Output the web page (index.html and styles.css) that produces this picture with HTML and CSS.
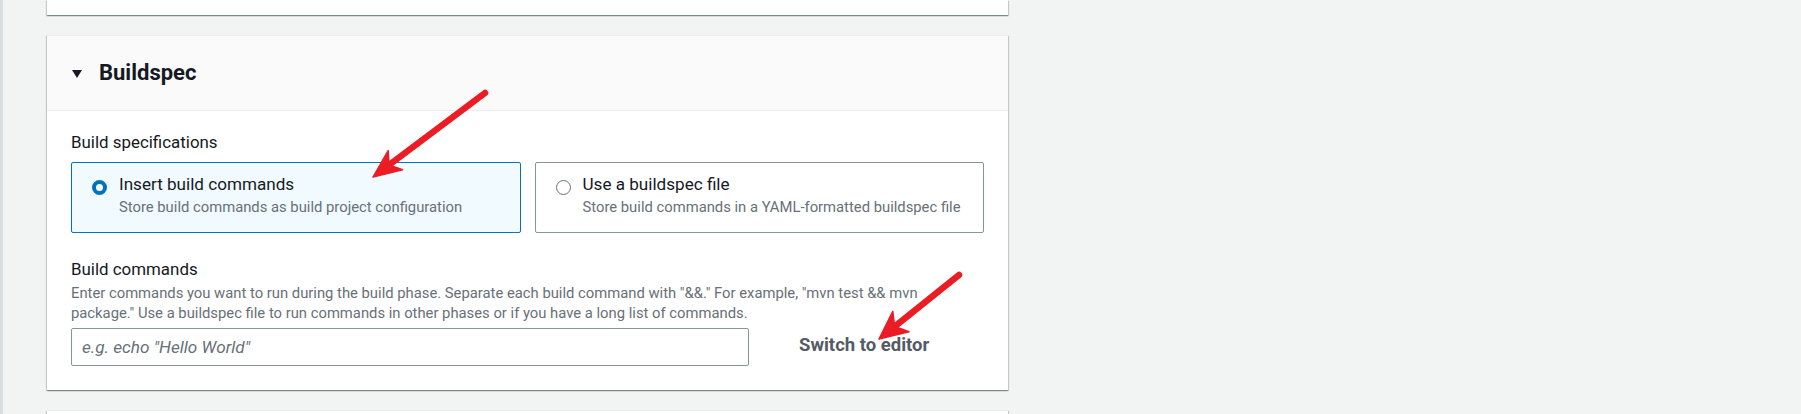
FILE: index.html
```html
<!DOCTYPE html>
<html lang="en">
<head>
<meta charset="utf-8">
<title>Buildspec</title>
<link rel="stylesheet" href="styles.css">
</head>
<body>
<div class="layout">
  <div class="edge"></div>
  <main class="main">
    <section class="card card-stub"></section>
    <section class="card">
      <header class="card-header">
        <span class="caret"></span>
        <h2 class="card-title">Buildspec</h2>
      </header>
      <div class="card-body">
        <div class="field">
          <div class="label">Build specifications</div>
          <div class="tiles">
            <label class="tile selected">
              <span class="radio on"></span>
              <span class="tile-text">
                <span class="tile-title">Insert build commands</span>
                <span class="tile-desc">Store build commands as build project configuration</span>
              </span>
            </label>
            <label class="tile">
              <span class="radio"></span>
              <span class="tile-text">
                <span class="tile-title">Use a buildspec file</span>
                <span class="tile-desc">Store build commands in a YAML-formatted buildspec file</span>
              </span>
            </label>
          </div>
        </div>
        <div class="field field-commands">
          <div class="label">Build commands</div>
          <div class="desc">Enter commands you want to run during the build phase. Separate each build command with "&amp;&amp;." For example, "mvn test &amp;&amp; mvn<br>package." Use a buildspec file to run commands in other phases or if you have a long list of commands.</div>
          <div class="control-row">
            <input class="input" type="text" placeholder='e.g. echo "Hello World"'>
            <button class="link-btn" type="button">Switch to editor</button>
          </div>
        </div>
      </div>
    </section>
    <section class="card card-next"></section>
  </main>
</div>
<svg class="annotations" width="1801" height="414" viewBox="0 0 1801 414" aria-hidden="true">
  <line x1="485" y1="93" x2="391" y2="163.5" class="shaft"/>
  <polygon points="373,177 388.2,150.6 389,165 402.6,169.8" class="head"/>
  <line x1="959" y1="275" x2="896" y2="325.5" class="shaft"/>
  <polygon points="879,339 892.8,311.3 894.6,326.5 909,331.7" class="head"/>
</svg>
</body>
</html>
```
FILE: styles.css
```css
html, body {
  margin: 0;
  padding: 0;
}
body {
  background: #f2f3f3;
  font-family: Roboto, "Liberation Sans", Arial, sans-serif;
  color: #16191f;
  width: 1801px;
  height: 414px;
  overflow: hidden;
  position: relative;
}
.layout {
  display: flex;
  height: 414px;
}
.edge {
  width: 3px;
  background: #d9dede;
  flex: none;
}
.main {
  padding-left: 44px;
  width: 961px;
  flex: none;
}
.card {
  background: #ffffff;
  box-shadow: 0 1px 1px 0 rgba(0, 28, 36, 0.3), 1px 1px 1px 0 rgba(0, 28, 36, 0.15), -1px 1px 1px 0 rgba(0, 28, 36, 0.15);
  border-top: 1px solid #eaeded;
  margin-bottom: 20px;
}
.card-stub {
  height: 15px;
  border-top: none;
}
.card-next {
  height: 20px;
}
.card-header {
  display: flex;
  align-items: center;
  height: 75px;
  box-sizing: border-box;
  padding-left: 25px;
  background: #fafafa;
  border-bottom: 1px solid #eaeded;
}
.caret {
  width: 0;
  height: 0;
  border-left: 5px solid transparent;
  border-right: 5px solid transparent;
  border-top: 8px solid #16191f;
  margin-right: 17px;
  margin-top: 1px;
}
.card-title {
  margin: 0;
  font-size: 22px;
  font-weight: 700;
  line-height: 28px;
  color: #16191f;
}
.card-body {
  padding: 20px 24px 24px 24px;
}
.label {
  font-size: 16.9px;
  line-height: 23px;
  color: #16191f;
}
.tiles {
  display: grid;
  grid-template-columns: 1fr 1fr;
  gap: 14px;
  margin-top: 8px;
}
.tile {
  display: flex;
  align-items: flex-start;
  border: 1px solid #879596;
  border-radius: 2px;
  padding: 10px 12px 15px 20px;
  background: #ffffff;
}
.tile.selected {
  background: #f1faff;
  border-color: #0073bb;
}
.radio {
  width: 15px;
  height: 15px;
  box-sizing: border-box;
  border-radius: 50%;
  border: 1px solid #687078;
  background: #ffffff;
  margin-top: 6.5px;
  margin-right: 12px;
  flex: none;
}
.radio.on {
  border: 4.5px solid #0073bb;
}
.tile-title {
  display: block;
  font-size: 17.1px;
  line-height: 23px;
  color: #16191f;
}
.tile-text {
  display: flex;
  flex-direction: column;
}
.tile-desc {
  font-size: 14.8px;
  line-height: 20px;
  margin-top: 1px;
  color: #687078;
}
.field-commands {
  margin-top: 25px;
}
.desc {
  font-size: 14.8px;
  line-height: 20px;
  margin-top: 2px;
  color: #687078;
}
.control-row {
  display: flex;
  align-items: center;
  margin-top: 5px;
}
.input {
  width: 678px;
  height: 38px;
  box-sizing: border-box;
  border: 1px solid #879596;
  border-radius: 2px;
  padding: 0 10px;
  font-family: Roboto, "Liberation Sans", Arial, sans-serif;
  font-size: 17.2px;
  color: #16191f;
  background: #ffffff;
}
.input::placeholder {
  color: #687078;
  font-style: italic;
}
.link-btn {
  margin-left: 50px;
  border: none;
  background: none;
  padding: 0;
  font-family: Roboto, "Liberation Sans", Arial, sans-serif;
  font-size: 18.5px;
  font-weight: 700;
  color: #545b64;
  line-height: 23px;
  margin-top: -3px;
}
.annotations {
  position: absolute;
  left: 0;
  top: 0;
  pointer-events: none;
}
.shaft {
  stroke: #ec1c24;
  stroke-width: 6.5;
  stroke-linecap: round;
}
.head {
  fill: #ec1c24;
  stroke: #ec1c24;
  stroke-width: 1.5;
  stroke-linejoin: round;
}
```
